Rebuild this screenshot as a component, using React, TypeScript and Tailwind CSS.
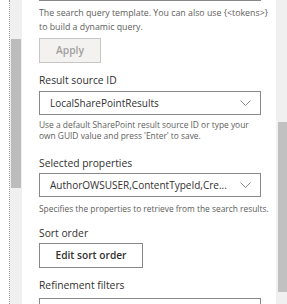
import React from "react";

const font = { fontFamily: '"Open Sans", "Liberation Sans", sans-serif' };

function Chevron() {
  return (
    <svg width="11" height="6" viewBox="0 0 11 6" className="shrink-0">
      <polyline points="0.5,0.5 5.5,5.5 10.5,0.5" fill="none" stroke="#8a8886" strokeWidth="1" />
    </svg>
  );
}

function Dropdown({ value }: { value: string }) {
  return (
    <div className="flex items-center h-[24px] border border-[#8a8886] pl-[10px] pr-[9px] gap-2 min-w-0">
      <span className="flex-1 min-w-0 overflow-hidden whitespace-nowrap text-[10px] text-[#323130] leading-[14px]">{value}</span>
      <Chevron />
    </div>
  );
}

function Label({ children, className = "" }: { children: React.ReactNode; className?: string }) {
  return <div className={`text-[10.3px] leading-[16px] text-[#323130] ${className}`}>{children}</div>;
}

export default function App() {
  return (
    <div className="w-[287px] h-[304px] flex overflow-hidden bg-white" style={font}>
      {/* left pane edge + scrollbar */}
      <div className="w-[9px] shrink-0 bg-white" />
      <div className="w-px shrink-0 border-l border-dotted border-[#9a9a9a]" />
      <div className="w-[12px] shrink-0 bg-[#f0f0f0] flex flex-col pt-[39px] pl-px pr-px">
        <div className="h-[149px] bg-[#bcbcbc]" />
      </div>

      {/* content */}
      <div className="flex-1 min-w-0 flex flex-col pl-[17px] pr-[15px]">
        <div className="relative shrink-0 h-[30px] -mt-[29px] border border-[#8a8886]">
          <svg width="8" height="6" viewBox="0 0 8 6" className="absolute right-[2px] bottom-0">
            <line x1="1" y1="6" x2="5" y2="0" stroke="#a19f9d" strokeWidth="0.8" />
            <line x1="4" y1="6" x2="8" y2="0" stroke="#a19f9d" strokeWidth="0.8" />
          </svg>
        </div>
        <div className="mt-[5px] text-[8.8px] leading-[14px] text-[#605e5c] whitespace-nowrap">
          The search query template. You can also use {"{<tokens>}"}
          <br />
          to build a dynamic query.
        </div>
        <div className="mt-[4px] shrink-0 w-[62px] h-[25px] border border-[#c8c6c4] bg-[#f3f2f1] flex items-center justify-center text-[10.3px] font-semibold text-[#a19f9d]">
          Apply
        </div>

        <Label className="mt-[9px]">Result source ID</Label>
        <div className="mt-[3px]">
          <Dropdown value="LocalSharePointResults" />
        </div>
        <div className="mt-[4px] text-[8.4px] leading-[11px] text-[#605e5c] whitespace-nowrap">
          Use a default SharePoint result source ID or type your
          <br />
          own GUID value and press 'Enter' to save.
        </div>

        <Label className="mt-[14px]">Selected properties</Label>
        <div className="mt-[2px]">
          <Dropdown value="AuthorOWSUSER,ContentTypeId,Cre..." />
        </div>
        <div className="mt-[6px] text-[8.4px] leading-[11px] text-[#605e5c] whitespace-nowrap">
          Specifies the properties to retrieve from the search results.
        </div>

        <Label className="mt-[11px]">Sort order</Label>
        <div className="mt-[2px] shrink-0 w-[104px] h-[25px] border border-[#8a8886] flex items-center justify-center text-[10.2px] font-semibold text-[#323130]">
          Edit sort order
        </div>

        <Label className="mt-[9px]">Refinement filters</Label>
        <div className="mt-[5px] shrink-0 h-[24px] border border-[#8a8886] pl-[18px] pt-[6px] text-[10px] leading-none text-[#323130] overflow-hidden whitespace-nowrap">
          FileType,spcontentclass
        </div>
      </div>

      {/* right scrollbar */}
      <div className="w-[11px] shrink-0 bg-[#f0f0f0] flex flex-col pt-[122px] pl-[2px]">
        <div className="h-[170px] bg-[#c1c1c1]" />
      </div>
    </div>
  );
}
